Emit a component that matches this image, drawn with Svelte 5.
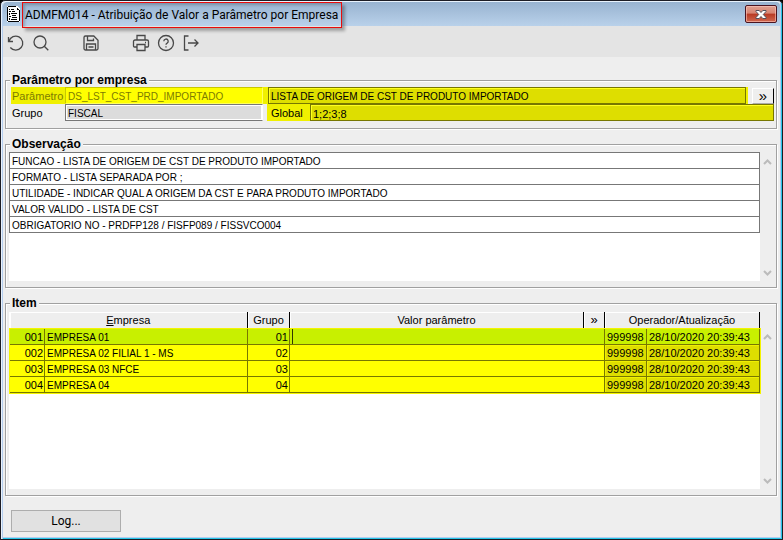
<script>
  let codigo = 'DS_LST_CST_PRD_IMPORTADO';
  let descricao = 'LISTA DE ORIGEM DE CST DE PRODUTO IMPORTADO';
  let grupo = 'FISCAL';
  let global = '1;2;3;8';

  const observacoes = [
    'FUNCAO - LISTA DE ORIGEM DE CST DE PRODUTO IMPORTADO',
    'FORMATO - LISTA SEPARADA POR ;',
    'UTILIDADE - INDICAR QUAL A ORIGEM DA CST E PARA PRODUTO IMPORTADO',
    'VALOR VALIDO - LISTA DE CST',
    'OBRIGATORIO NO - PRDFP128 / FISFP089 / FISSVCO004'
  ];

  let itens = [
    { codigo: '001', empresa: 'EMPRESA 01', grupo: '01', valor: '', operador: '999998', data: '28/10/2020 20:39:43' },
    { codigo: '002', empresa: 'EMPRESA 02 FILIAL 1 - MS', grupo: '02', valor: '', operador: '999998', data: '28/10/2020 20:39:43' },
    { codigo: '003', empresa: 'EMPRESA 03 NFCE', grupo: '03', valor: '', operador: '999998', data: '28/10/2020 20:39:43' },
    { codigo: '004', empresa: 'EMPRESA 04', grupo: '04', valor: '', operador: '999998', data: '28/10/2020 20:39:43' }
  ];

  let selected = 0;
</script>

<div class="window">
  <header class="titlebar">
    <svg class="doc" width="13" height="16" viewBox="0 0 13 16" shape-rendering="crispEdges">
      <path d="M0 0h10l3 3v13H0z" fill="#fff" />
      <path d="M1 0h8v1H1zM0 1h1v14H0zM1 15h11v1H1zM12 4h1v11h-1zM9 1h1v3h2v-1h-1v-1h-1z" fill="#000" />
      <path d="M2 3h1v1H2zM4 3h3v1H4zM2 5h2v1H2zM5 5h3v1H5zM2 7h1v2H2zM4 7h6v1H4zM5 9h4v1H5zM2 10h2v1H2zM5 11h5v1H5zM2 12h1v2H2zM4 13h6v1H4z" fill="#000" />
    </svg>
    <h1>ADMFM014 - Atribuição de Valor a Parâmetro por Empresa</h1>
    <button class="close" aria-label="Fechar">
      <svg width="12" height="9" viewBox="0 0 12 9">
        <path d="M1 .5h3.200L6 2.500 7.800.5H11v1L8.300 4.500 11 7.500v1H7.800L6 6.500 4.200 8.500H1v-1L3.700 4.500 1 1.500z" fill="#fff" stroke="#53505c" />
      </svg>
    </button>
  </header>

  <nav class="toolbar">
    <button aria-label="Desfazer">
      <svg viewBox="0 0 18 18"><path d="M1.500 3v4.500H6M2 7.200A7 7 0 1 1 3.300 13.500" /></svg>
    </button>
    <button aria-label="Pesquisar">
      <svg viewBox="0 0 18 18"><circle cx="8" cy="8" r="6" /><path d="M12.300 12.300l4 4" /></svg>
    </button>
    <button class="sep" aria-label="Salvar">
      <svg viewBox="0 0 18 18"><path d="M3.500 2h8.300L16 6.200v8.300a1.500 1.500 0 0 1-1.500 1.500h-11A1.500 1.500 0 0 1 2 14.500v-11A1.500 1.500 0 0 1 3.500 2zM5.500 2v4.500h6V4.500M4.500 16v-6h9v6M6.500 13h5" /></svg>
    </button>
    <button class="sep" aria-label="Imprimir">
      <svg viewBox="0 0 18 18"><path d="M5 6V1.500h8V6M5 13H2.500A1 1 0 0 1 1.500 12V7.500A1.500 1.500 0 0 1 3 6h12a1.500 1.500 0 0 1 1.500 1.500V12a1 1 0 0 1-1 1H13M5 10.500h8v6H5zM13 8.500h1" /></svg>
    </button>
    <button aria-label="Ajuda">
      <svg viewBox="0 0 18 18"><circle cx="9" cy="9" r="7.500" /><path d="M6.800 7.200a2.200 2.200 0 1 1 3.300 1.900c-.8.4-1.100.9-1.100 1.700M9 12.300v1.300" /></svg>
    </button>
    <button aria-label="Sair">
      <svg viewBox="0 0 18 18"><path d="M6.500 2H2.500v14h4M6 9h10M12.500 5.500L16 9l-3.500 3.500" /></svg>
    </button>
  </nav>

  <main>
    <fieldset>
      <legend>Parâmetro por empresa</legend>
      <div class="row">
        <div class="marked">
          <label class="caption off" for="codigo">Parâmetro</label>
          <input id="codigo" class="short code" bind:value={codigo} />
          <input class="desc dark" aria-label="Descrição" readonly value={descricao} />
        </div>
        <button class="lookup" aria-label="Procurar parâmetro">»</button>
      </div>
      <div class="row last">
        <label class="caption" for="grupo">Grupo</label>
        <input id="grupo" class="short gray" readonly value={grupo} />
        <div class="marked global">
          <label for="global">Global</label>
          <input id="global" class="dark value" bind:value={global} />
        </div>
      </div>
    </fieldset>

    <fieldset>
      <legend>Observação</legend>
      <div class="list">
        <div class="sheet obs">
          <table>
            <tbody>
              {#each observacoes as obs}
                <tr><td class="caps">{obs}</td></tr>
              {/each}
            </tbody>
          </table>
        </div>
        <div class="scroll">
          <svg width="9" height="6" viewBox="0 0 9 6"><path d="M1 5l3.500-3.500L8 5" /></svg>
          <svg width="9" height="6" viewBox="0 0 9 6"><path d="M1 1l3.500 3.500L8 1" /></svg>
        </div>
      </div>
    </fieldset>

    <fieldset>
      <legend>Item</legend>
      <div class="list">
        <div class="sheet items">
          <table class="grid">
            <colgroup>
              <col class="c-cod" /><col class="c-emp" /><col class="c-grp" /><col /><col class="c-btn" /><col class="c-op" /><col class="c-data" />
            </colgroup>
            <thead>
              <tr>
                <th colspan="2"><u>E</u>mpresa</th>
                <th>Grupo</th>
                <th>Valor parâmetro</th>
                <th><button aria-label="Procurar valor">»</button></th>
                <th colspan="2">Operador/Atualização</th>
              </tr>
            </thead>
            <tbody>
              {#each itens as item, i}
                <tr class:selected={i === selected} on:click={() => (selected = i)}>
                  <td class="num">{item.codigo}</td>
                  <td class="caps">{item.empresa}</td>
                  <td class="num">{item.grupo}</td>
                  <td class="valor" colspan="2"><input aria-label="Valor parâmetro {item.codigo}" bind:value={item.valor} /></td>
                  <td class="log">{item.operador}</td>
                  <td class="log">{item.data}</td>
                </tr>
              {/each}
            </tbody>
          </table>
        </div>
        <div class="scroll below">
          <svg width="9" height="6" viewBox="0 0 9 6"><path d="M1 5l3.500-3.500L8 5" /></svg>
          <svg width="9" height="6" viewBox="0 0 9 6"><path d="M1 1l3.500 3.500L8 1" /></svg>
        </div>
      </div>
    </fieldset>

    <button class="log-button">Log...</button>
  </main>
</div>

<style>
  :global(body) {
    margin: 0;
    background: #000;
  }

  .window {
    box-sizing: border-box;
    min-height: 100vh;
    border: 1px solid #1c1c24;
    border-radius: 5px 5px 0 0;
    box-shadow: inset 1px 1px 0 #e8f2fc, inset 2px 0 0 #b4cdee, inset -1px -1px 0 #25c6e8, inset -2px -2px 0 #b4cdee;
    padding: 1px 2px 2px 2px;
    background: #eee;
    font-family: "Liberation Sans", Arial, sans-serif;
    font-size: 11px;
    line-height: 14px;
    color: #000;
  }

  button,
  input {
    box-sizing: border-box;
    font: inherit;
    color: inherit;
    margin: 0;
    padding: 0;
    border-radius: 0;
  }

  .titlebar {
    display: flex;
    align-items: center;
    height: 24px;
    padding: 0 3px 0 4px;
    border-radius: 4px 4px 0 0;
    background: linear-gradient(#98b3d0, #b9d1ea);
  }

  .titlebar h1 {
    box-sizing: border-box;
    height: 26px;
    margin: 2px 0 0 2px;
    padding: 0 3px 0 2px;
    border: 1px solid #e80c0c;
    box-shadow: 3px 3px 3px rgba(0, 0, 0, 0.3), inset 2px 2px 3px rgba(0, 0, 0, 0.2);
    font: 12px/24px Roboto, "Open Sans", sans-serif;
    white-space: nowrap;
    z-index: 1;
  }

  .close {
    display: flex;
    align-items: center;
    justify-content: center;
    width: 32px;
    height: 18px;
    margin-left: auto;
    border: 1px solid #4a1420;
    border-radius: 2px;
    background: linear-gradient(#e0a090, #d88472 45%, #b83a24 50%, #d06850);
    box-shadow: inset 0 0 0 1px rgba(255, 200, 190, 0.6);
  }

  .toolbar {
    display: flex;
    align-items: center;
    gap: 5px;
    height: 31px;
    padding: 3px 0 0 3px;
    box-sizing: border-box;
    background: #e4e4e4;
  }

  .toolbar button {
    width: 20px;
    height: 20px;
    border: 0;
    background: none;
    display: flex;
    align-items: center;
    justify-content: center;
  }

  .toolbar .sep {
    margin-left: 25px;
  }

  .toolbar svg {
    width: 18px;
    height: 18px;
    fill: none;
    stroke: #484848;
    stroke-width: 1.3;
  }

  main {
    padding: 16px 3px 3px 2px;
  }

  fieldset {
    min-width: 0;
    margin: 0 0 8px;
    padding: 0 2px 6px 3px;
    border: 1px solid #a0a0a0;
    box-shadow: 1px 1px 0 #fff, inset 1px 1px 0 #fff;
  }

  legend {
    margin-left: 1px;
    padding: 0 2px;
    background: #eee;
    font-size: 12px;
    font-weight: bold;
  }

  .row {
    display: flex;
    height: 17px;
    padding-left: 2px;
  }

  .row.last {
    margin-bottom: 1px;
  }

  .marked {
    display: flex;
    flex: 1;
    background: #f0f000;
  }

  .row label {
    padding-left: 1px;
    line-height: 18px;
  }

  .row .caption {
    box-sizing: border-box;
    width: 54px;
  }

  .row .off {
    color: #7c7c00;
  }

  .row input {
    flex: 1;
    min-width: 0;
    height: 17px;
    padding: 2px 0 0 2px;
    border: 1px solid #777700;
    outline: none;
    font-size: 10px;
  }

  .row .short {
    flex: none;
    width: 198px;
  }

  .row .code {
    border-color: #c8c800 #ffff60 #ffff60 #c8c800;
    background: #ff0;
    color: #7c7c00;
  }

  .row .desc {
    margin: 0 2px 0 5px;
  }

  .row .dark {
    background: #dede00;
    box-shadow: inset 1px 1px 0 #ffff20;
  }

  .row .value {
    font-size: 11px;
  }

  .row .gray {
    border-color: #777 #fff #777 #777;
    background: #dcdcdc;
    box-shadow: inset 0 0 0 1px #fff;
  }

  .row .global {
    margin-left: 4px;
  }

  .row .global label {
    box-sizing: border-box;
    width: 43px;
    padding-left: 4px;
  }

  .lookup {
    width: 22px;
    margin: 1px 0 0 4px;
    border: 1px solid #fff;
    border-right-color: #000;
    border-bottom-color: #aaa;
    background: #eee;
    font-size: 15px;
    line-height: 12px;
  }

  .list {
    display: flex;
    padding-top: 1px;
  }

  .sheet {
    flex: 1;
    background: #fff;
  }

  .obs {
    min-height: 129px;
  }

  .items {
    min-height: 177px;
    border-top: 1px solid #eee;
  }

  .scroll {
    display: flex;
    flex-direction: column;
    align-items: center;
    justify-content: space-between;
    width: 14px;
    padding: 7px 0 5px;
    box-sizing: border-box;
  }

  .scroll.below {
    padding-top: 23px;
  }

  .scroll svg {
    fill: none;
    stroke: #bbb;
    stroke-width: 2;
  }

  table {
    width: 100%;
    border-collapse: collapse;
    table-layout: fixed;
  }

  td {
    height: 14px;
    padding: 1px 2px 0;
    border: 1px solid #777;
    line-height: 14px;
    white-space: nowrap;
  }

  .caps {
    height: 13px;
    padding-top: 2px;
    font-size: 10px;
    line-height: 13px;
  }

  .c-cod { width: 35px; }
  .c-emp { width: 203px; }
  .c-grp { width: 42px; }
  .c-btn { width: 21px; }
  .c-op { width: 42px; }
  .c-data { width: 113px; }

  th {
    height: 16px;
    padding: 0;
    border-right: 1px solid #000;
    background: #eee;
    box-shadow: inset 1px 1px 0 #fff;
    font-weight: normal;
    line-height: 16px;
  }

  th button {
    display: block;
    width: 100%;
    height: 16px;
    border: 0;
    background: none;
    font-size: 13px;
    line-height: 14px;
  }

  .grid tbody {
    background: #ff0;
    outline: 1px solid #f4f400;
  }

  .grid td {
    border-color: #777700;
  }

  .grid .num {
    padding-right: 1px;
    text-align: right;
  }

  .grid .valor {
    height: 15px;
    padding: 0 2px;
  }

  .valor input {
    display: block;
    width: 100%;
    height: 15px;
    border: 0;
    background: none;
    outline: none;
  }

  .grid .log {
    background: #dede00;
    box-shadow: inset 1px 1px 0 #f0f000;
  }

  .grid .selected td {
    background: #c8f000;
    box-shadow: none;
  }

  .grid .selected .valor {
    border-top-color: #008000;
  }

  .selected .valor input {
    border-left: 1px solid #303800;
  }

  .log-button {
    display: block;
    width: 110px;
    height: 22px;
    margin: 14px 0 0 6px;
    border: 1px solid #adadad;
    background: #e1e1e1;
    font: 12px/20px Roboto, "Open Sans", sans-serif;
  }
</style>
